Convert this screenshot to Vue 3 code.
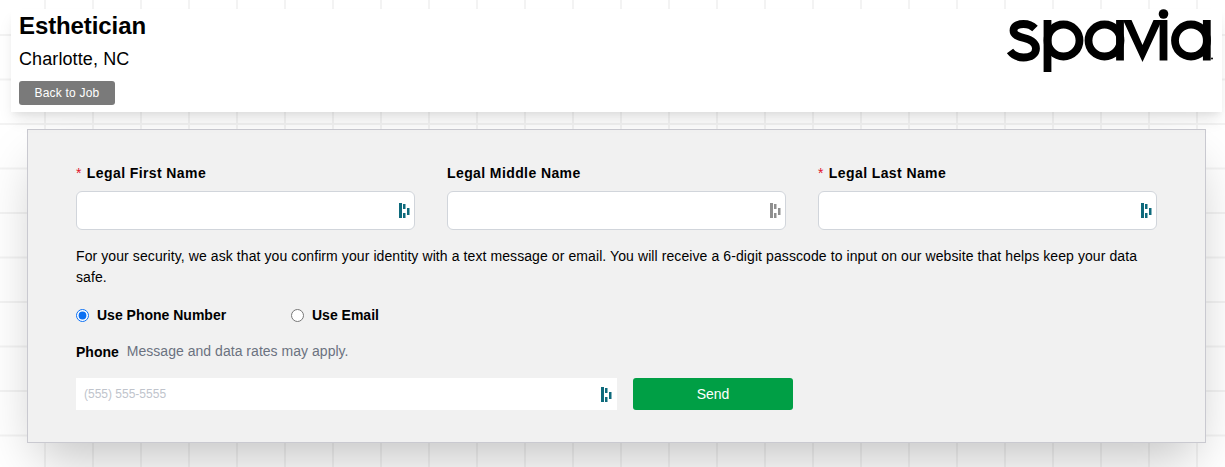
<template>
  <div class="page">
    <header class="job-header">
      <div class="job-info">
        <h1 class="job-title">Esthetician</h1>
        <p class="job-location">Charlotte, NC</p>
        <button class="back-btn">Back to Job</button>
      </div>
      <svg class="logo" width="206" height="64" viewBox="0 0 206 64" role="img" aria-label="spavia">
        <g fill="none" stroke="#000" stroke-width="7.800">
          <path d="M28 18.500 C25 15.500 21 14 16.500 14 C10 14 6.500 16.500 6.500 20.500 C6.500 25 11 26.500 17 28 C24 29.800 29 32.500 29 38.500 C29 44 24 47.500 16.500 47.500 C10.500 47.500 6 45 3 41" />
          <circle cx="56.500" cy="30.500" r="16" />
          <path d="M40.500 10 V62" />
          <circle cx="97.500" cy="30.500" r="16" />
          <path d="M113 10 V50.500" />
          <circle cx="184" cy="30.500" r="16" />
          <path d="M199.800 10 V50.500" />
          <path d="M156.500 10 V50.500" />
        </g>
        <path d="M116 10 H124.500 L135.500 35 L146.500 10 H155 L135.500 52 Z" fill="#000" />
        <circle cx="156.500" cy="4" r="4.800" fill="#000" />
        <circle cx="205" cy="48.500" r="1" fill="#000" />
      </svg>
    </header>

    <form class="form-card" @submit.prevent>
      <div class="name-row">
        <div v-for="f in nameFields" :key="f.label" class="field">
          <label class="label"><span v-if="f.required" class="req">*</span>{{ f.label }}</label>
          <div class="input-box">
            <svg class="key-icon" :class="{ muted: f.muted }" width="11" height="15" viewBox="0 0 11 15">
              <path d="M0 0H3V15H0Z M4 1H6.500V6H4Z M4 10H6.500V15H4Z M8 5H10.500V12H8Z" />
            </svg>
          </div>
        </div>
      </div>

      <p class="notice">For your security, we ask that you confirm your identity with a text message or email. You will receive a 6-digit passcode to input on our website that helps keep your data safe.</p>

      <div class="radio-row">
        <label class="radio-item wide"><input type="radio" name="method" checked />Use Phone Number</label>
        <label class="radio-item"><input type="radio" name="method" />Use Email</label>
      </div>

      <div class="phone-head">
        <span class="phone-label">Phone</span>
        <span class="phone-hint">Message and data rates may apply.</span>
      </div>

      <div class="phone-row">
        <div class="phone-input">
          <span>(555) 555-5555</span>
          <svg class="key-icon" width="11" height="15" viewBox="0 0 11 15">
            <path d="M0 0H3V15H0Z M4 1H6.500V6H4Z M4 10H6.500V15H4Z M8 5H10.500V12H8Z" />
          </svg>
        </div>
        <button class="send-btn">Send</button>
      </div>
    </form>
  </div>
</template>

<script setup>
const nameFields = [
  { label: "Legal First Name", required: true },
  { label: "Legal Middle Name", muted: true },
  { label: "Legal Last Name", required: true },
];
</script>

<style>
html, body {
  margin: 0;
  background: #fff;
}
</style>

<style scoped>
.page {
  box-sizing: border-box;
  height: 467px;
  overflow: hidden;
  padding: 9px 3px 0 11px;
  font-family: "Liberation Sans", Arial, sans-serif;
  color: #000;
  background-color: #fff;
  background-image:
    linear-gradient(to right, #f3f3f3 2px, transparent 2px),
    linear-gradient(to bottom, #f3f3f3 2px, transparent 2px);
  background-size: 48px 44.5px;
  background-position: 44px 34px;
}

.job-header {
  display: flex;
  justify-content: space-between;
  height: 103px;
  background: #fff;
  box-shadow: 0 10px 15px -3px rgba(0, 0, 0, 0.1), 0 4px 6px -2px rgba(0, 0, 0, 0.05);
  position: relative;
}

.job-info {
  padding-left: 8px;
}

.job-title {
  margin: 1px 0 0;
  font-size: 24px;
  line-height: 32px;
  font-weight: 700;
  letter-spacing: -0.1px;
}

.job-location {
  margin: 5px 0 0;
  font-size: 18px;
  line-height: 24px;
  letter-spacing: 0.1px;
}

.back-btn {
  display: block;
  width: 96px;
  height: 24px;
  margin-top: 10px;
  border: 0;
  border-radius: 3px;
  padding: 0;
  background: #7a7a7a;
  color: #fff;
  font: 12px "Liberation Sans", Arial, sans-serif;
  letter-spacing: 0.2px;
}

.logo {
  margin: 1px 9px 0 0;
  overflow: visible;
}

.form-card {
  box-sizing: border-box;
  width: 1179px;
  height: 314px;
  margin: 17px 0 0 16px;
  padding: 33px 48px 0;
  background: #f1f1f1;
  border: 1px solid #c9c9d0;
  box-shadow: 0 25px 50px -12px rgba(0, 0, 0, 0.25);
}

.name-row {
  display: grid;
  grid-template-columns: repeat(3, 339px);
  column-gap: 32px;
}

.label {
  display: block;
  font-size: 14px;
  line-height: 20px;
  font-weight: 700;
  letter-spacing: 0.4px;
  margin-bottom: 8px;
}

.req {
  color: #e0112b;
  font-weight: 400;
  margin-right: 5px;
}

.input-box {
  box-sizing: border-box;
  height: 39px;
  display: flex;
  align-items: center;
  justify-content: flex-end;
  padding-right: 4px;
  background: #fff;
  border: 1px solid #d1d5db;
  border-radius: 6px;
}

.key-icon {
  fill: #0e6a7c;
}

.key-icon.muted {
  fill: #8f8f8f;
}

.notice {
  margin: 16px 0 0;
  font-size: 14px;
  line-height: 21px;
  letter-spacing: 0.09px;
}

.radio-row {
  display: flex;
  margin-top: 17px;
}

.radio-item {
  display: flex;
  align-items: center;
  gap: 8px;
  font-size: 14px;
  line-height: 20px;
  font-weight: 700;
}

.radio-item.wide {
  width: 215px;
}

.radio-item input {
  width: 13px;
  height: 13px;
  margin: 0;
  accent-color: #0b6ff2;
}

.phone-head {
  display: flex;
  align-items: center;
  gap: 8px;
  margin-top: 16px;
  line-height: 20px;
}

.phone-label {
  font-size: 14px;
  font-weight: 700;
}

.phone-hint {
  margin-bottom: 2px;
  font-size: 14px;
  color: #6b7280;
  letter-spacing: 0.03px;
}

.phone-row {
  display: flex;
  gap: 16px;
  margin-top: 15px;
}

.phone-input {
  box-sizing: border-box;
  width: 541px;
  height: 32px;
  display: flex;
  align-items: center;
  justify-content: space-between;
  padding: 0 5px 0 8px;
  background: #fff;
  font-size: 12px;
  color: #c0c4cc;
}

.send-btn {
  width: 160px;
  height: 32px;
  border: 0;
  border-radius: 3px;
  background: #009f45;
  color: #fff;
  font: 14px "Liberation Sans", Arial, sans-serif;
}
</style>
